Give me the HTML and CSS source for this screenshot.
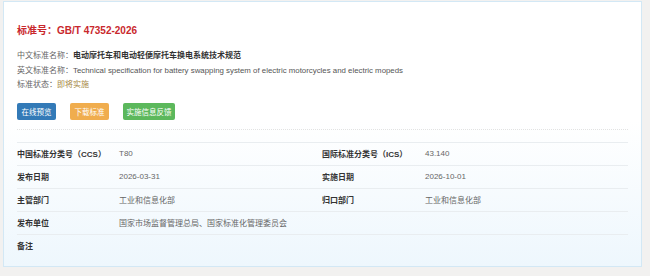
FILE: index.html
```html
<!DOCTYPE html>
<html lang="zh-CN">
<head>
<meta charset="utf-8">
<title>GB/T 47352-2026</title>
<link rel="stylesheet" href="styles.css">
</head>
<body>
<div class="card">
  <h1 class="title">标准号：GB/T 47352-2026</h1>
  <div class="info">
    <div class="info-row"><span class="info-label">中文标准名称：</span><span class="info-cn">电动摩托车和电动轻便摩托车换电系统技术规范</span></div>
    <div class="info-row"><span class="info-label">英文标准名称：</span><span class="info-en">Technical specification for battery swapping system of electric motorcycles and electric mopeds</span></div>
    <div class="info-row"><span class="info-label">标准状态：</span><span class="info-status">即将实施</span></div>
  </div>
  <div class="actions">
    <span class="btn btn-blue">在线预览</span>
    <span class="btn btn-orange">下载标准</span>
    <span class="btn btn-green">实施信息反馈</span>
  </div>
  <div class="divider"></div>
  <div class="table">
    <div class="cell label">中国标准分类号（CCS）</div><div class="cell value">T80</div>
    <div class="cell label">国际标准分类号（ICS）</div><div class="cell value">43.140</div>
    <div class="cell label">发布日期</div><div class="cell value">2026-03-31</div>
    <div class="cell label">实施日期</div><div class="cell value">2026-10-01</div>
    <div class="cell label">主管部门</div><div class="cell value">工业和信息化部</div>
    <div class="cell label">归口部门</div><div class="cell value">工业和信息化部</div>
    <div class="cell label">发布单位</div><div class="cell value wide">国家市场监督管理总局、国家标准化管理委员会</div>
    <div class="cell label">备注</div><div class="cell value wide"></div>
  </div>
</div>
</body>
</html>
```
FILE: styles.css
```css
html, body {
  margin: 0;
  padding: 0;
}
body {
  background: #f2f1f0;
  font-family: "Liberation Sans", "Noto Sans CJK SC", sans-serif;
  font-size: 8px;
  color: #555;
}
.card {
  margin: 1px 0 0 3px;
  width: 639px;
  height: 266px;
  box-sizing: border-box;
  border: 1px solid #d3e8f5;
  background: linear-gradient(to bottom, #ffffff 0%, #ffffff 45%, #eef7fd 100%);
  padding: 21px 13px 0 13px;
}
.title {
  margin: 0;
  font-size: 10px;
  line-height: 16px;
  font-weight: bold;
  color: #c9282d;
}
.info {
  margin-top: 10px;
  display: flex;
  flex-direction: column;
}
.info-row {
  line-height: 14.5px;
  height: 14.5px;
  white-space: nowrap;
}
.info-label { color: #666; }
.info-cn { color: #333; font-weight: bold; }
.info-en { color: #555; font-size: 7.85px; }
.info-status { color: #a5873f; }
.actions {
  margin-top: 10px;
  display: flex;
  gap: 14px;
}
.btn {
  display: inline-flex;
  align-items: center;
  justify-content: center;
  height: 17px;
  padding: 0;
  border-radius: 2px;
  color: #fff;
  font-size: 7.5px;
  white-space: nowrap;
  box-sizing: border-box;
}
.btn-blue { background: #337ab7; width: 39px; }
.btn-orange { background: #f0ad4e; width: 39px; }
.btn-green { background: #5cb85c; width: 52px; }
.divider {
  margin-top: 9px;
  width: 611px;
  border-top: 1px dotted #e2e2e2;
}
.table {
  margin-top: 12px;
  width: 611px;
  display: grid;
  grid-template-columns: 102px 203px 103px 203px;
}
.cell {
  height: 23px;
  box-sizing: border-box;
  border-top: 1px solid #e9edf0;
  display: flex;
  align-items: center;
  white-space: nowrap;
}
.label {
  color: #333;
  font-weight: bold;
}
.value {
  color: #666;
}
.wide {
  grid-column: span 3;
}
```
